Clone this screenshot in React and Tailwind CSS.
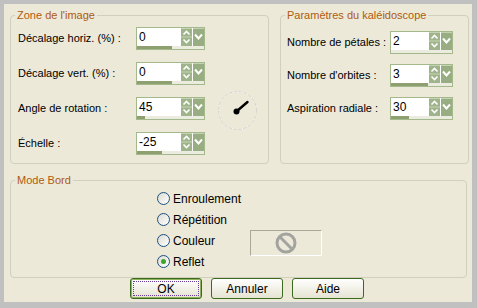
import React from 'react';

const zoneRows = [
    { label: 'Décalage horiz. (%) :', value: '0', fill: 52 },
    { label: 'Décalage vert. (%) :', value: '0', fill: 52 },
    { label: 'Angle de rotation :', value: '45', fill: 12 },
    { label: 'Échelle :', value: '-25', fill: 37 },
];

const kaleidoRows = [
    { label: 'Nombre de pétales :', value: '2', fill: 0 },
    { label: "Nombre d'orbites :", value: '3', fill: 61 },
    { label: 'Aspiration radiale :', value: '30', fill: 30 },
];

const modes = [
    { label: 'Enroulement', checked: false },
    { label: 'Répétition', checked: false },
    { label: 'Couleur', checked: false },
    { label: 'Reflet', checked: true },
];

// spin up/down + dropdown buttons, xp olive style
const SpinButtons = () => (
    <div className="flex h-[18px]">
        <svg width="11" height="18" viewBox="0 0 11 18">
            <rect x="0" y="0" width="11" height="18" fill="#9fb48a" />
            <rect x="0" y="0" width="11" height="1" fill="#c3d3b2" />
            <rect x="0" y="8.5" width="11" height="1" fill="#c3d3b2" />
            <path d="M2.5 6.5 L5.5 3.5 L8.5 6.5" fill="none" stroke="#fff" strokeWidth="1.6" />
            <path d="M2.5 11.5 L5.5 14.5 L8.5 11.5" fill="none" stroke="#fff" strokeWidth="1.6" />
        </svg>
        <svg width="11" height="18" viewBox="0 0 11 18" className="ml-[1px]">
            <rect x="0" y="0" width="11" height="18" fill="#98ad82" />
            <rect x="0" y="0" width="11" height="1" fill="#c3d3b2" />
            <path d="M2 6.5 L5.5 10.5 L9 6.5" fill="none" stroke="#fff" strokeWidth="2" />
        </svg>
    </div>
);

const SpinBox = ({ value, fill, width }) => (
    <div className={`flex h-[23px] flex-col border border-[#a3b98b] bg-white ${width}`}>
        <div className="flex h-[18px]">
            <div className="flex-1 pl-[2px] text-[12px] leading-[18px] text-black">{value}</div>
            <SpinButtons />
        </div>
        <div className="h-[3px] bg-[#ecebe0]">
            <div className="h-full bg-[#8e9f70]" style={{ width: `${fill}%` }} />
        </div>
    </div>
);

const Dial = () => (
    <svg width="40" height="40" viewBox="0 0 40 40">
        <circle cx="19.5" cy="19.5" r="19" fill="none" stroke="#ffffff" strokeWidth="1" />
        <circle cx="19.5" cy="19.5" r="19" fill="none" stroke="#d4d2c6" strokeWidth="1" strokeDasharray="4 1" />
        <line x1="19" y1="20" x2="29.5" y2="11" stroke="#000" strokeWidth="2.4" strokeLinecap="round" />
        <circle cx="18.5" cy="20.5" r="3" fill="#000" />
    </svg>
);

const Radio = ({ checked }) => (
    <div className="flex h-[13px] w-[13px] items-center justify-center rounded-full border border-[#1c5180] bg-gradient-to-br from-[#dcdbd2] to-white">
        {checked && <div className="h-[5px] w-[5px] rounded-full bg-[#3da52a]" />}
    </div>
);

const Group = ({ title, className, children }) => (
    <fieldset className={`m-0 rounded-[4px] border border-[#d0cfc0] p-0 ${className}`}>
        <legend className="ml-[4px] px-[2px] text-[11px] leading-[13px] text-[#b05a0e]">{title}</legend>
        {children}
    </fieldset>
);

const XpButton = ({ label, isDefault }) => (
    <button
        className={`flex h-[21px] w-[72px] items-center justify-center rounded-[3px] border border-[#3b6a1e] bg-gradient-to-b from-white to-[#e6e3d2] p-[2px] text-[12px] text-black ${isDefault ? 'shadow-[inset_0_0_0_1px_#8fb35a]' : ''}`}
    >
        {isDefault ? (
            <span className="flex h-full w-full items-center justify-center border border-dotted border-[#6a3c9a]">{label}</span>
        ) : (
            label
        )}
    </button>
);

export default function App() {
    return (
        <div className="h-[308px] w-[477px] bg-[#c0c0c0] pb-[6px] pl-[4px] pr-[5px] pt-[4px] font-['Liberation_Sans',Arial,sans-serif] text-[11px] text-black">
            <div className="flex h-full flex-col bg-[#ece9d8] pl-[6px] pt-[5px]">
                <div className="flex gap-[11px]">
                    <Group title="Zone de l'image" className="h-[155px] w-[259px]">
                        <div className="flex pl-[7px] pt-[5px]">
                            <div className="flex flex-col gap-[12px]">
                                {zoneRows.map(row => (
                                    <div key={row.label} className="flex items-center">
                                        <span className="w-[118px]">{row.label}</span>
                                        <SpinBox value={row.value} fill={row.fill} width="w-[69px]" />
                                    </div>
                                ))}
                            </div>
                            <div className="ml-[13px] mt-[64px]">
                                <Dial />
                            </div>
                        </div>
                    </Group>
                    <Group title="Paramètres du kaléidoscope" className="h-[155px] w-[189px]">
                        <div className="flex flex-col gap-[10px] pl-[6px] pt-[9px]">
                            {kaleidoRows.map(row => (
                                <div key={row.label} className="flex items-center">
                                    <span className="w-[103px]">{row.label}</span>
                                    <SpinBox value={row.value} fill={row.fill} width="w-[63px]" />
                                </div>
                            ))}
                        </div>
                    </Group>
                </div>

                <Group title="Mode Bord" className="mt-[10px] h-[104px] w-[457px]">
                    <div className="flex pl-[146px] pt-[1px]">
                        <div className="flex w-[93px] flex-col">
                            {modes.map(m => (
                                <div key={m.label} className="flex h-[21px] items-center gap-[3px] text-[12px]">
                                    <Radio checked={m.checked} />
                                    <span>{m.label}</span>
                                </div>
                            ))}
                        </div>
                        <div className="mt-[42px] flex h-[26px] w-[72px] items-center justify-center border-b border-l border-r border-t border-b-white border-l-[#aca899] border-r-white border-t-[#aca899]">
                            <svg width="22" height="22" viewBox="0 0 22 22">
                                <circle cx="11" cy="11" r="9" fill="none" stroke="#a3a3a0" strokeWidth="3" />
                                <line x1="4.8" y1="4.8" x2="17.2" y2="17.2" stroke="#a3a3a0" strokeWidth="3" />
                            </svg>
                        </div>
                    </div>
                </Group>

                <div className="flex gap-[9px] pl-[120px]">
                    <XpButton label="OK" isDefault />
                    <XpButton label="Annuler" />
                    <XpButton label="Aide" />
                </div>
            </div>
        </div>
    );
}
